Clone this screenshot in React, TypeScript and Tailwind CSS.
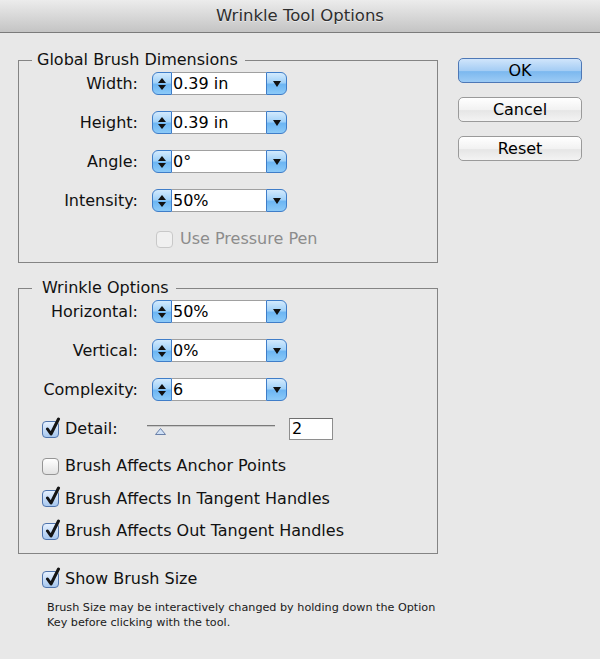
import React from 'react';
import clsx from 'clsx';

// Aqua blue used by spinner / dropdown buttons and the default button
const aqua =
  'bg-[linear-gradient(#d3eafd,#a2d2f9_45%,#6db6f3_55%,#8ccaf8)] border-[#3f7dc8]';

function SpinField({ value }: { value: string }) {
  return (
    <div className="flex h-[23px] w-[135px]">
      <div
        className={clsx(
          'flex w-[20px] flex-col items-center justify-center gap-[2px] rounded-l-[6px] border',
          aqua
        )}
      >
        <svg width="8" height="5" viewBox="0 0 8 5">
          <path d="M4 0L8 5H0z" fill="#111" />
        </svg>
        <svg width="8" height="5" viewBox="0 0 8 5">
          <path d="M0 0h8L4 5z" fill="#111" />
        </svg>
      </div>
      <div className="flex-1 border-y border-[#a0a0a0] bg-white pl-[1px] text-[16px] leading-[21px] text-black">
        {value}
      </div>
      <div
        className={clsx(
          'flex w-[21px] items-center justify-center rounded-r-[6px] border',
          aqua
        )}
      >
        <svg width="8" height="6" viewBox="0 0 8 6">
          <path d="M0 0h8L4 6z" fill="#111" />
        </svg>
      </div>
    </div>
  );
}

function Check({ checked, disabled }: { checked?: boolean; disabled?: boolean }) {
  return (
    <span
      className={clsx(
        'relative inline-block h-[17px] w-[17px] shrink-0 rounded-[4px] border',
        checked
          ? 'border-[#4f74ad] bg-[linear-gradient(#e6f1ff,#a7c7ee)]'
          : disabled
            ? 'border-[#c8c8c8] bg-[#f0f0f0]'
            : 'border-[#959595] bg-[linear-gradient(#ffffff,#e2e2e2)]'
      )}
    >
      {checked && (
        <svg
          className="absolute left-[1px] top-[-5px]"
          width="17"
          height="20"
          viewBox="0 0 17 20"
        >
          <path
            d="M3.5 12 L7 17 L14.5 2"
            fill="none"
            stroke="#141414"
            strokeWidth="3"
            strokeLinecap="round"
            strokeLinejoin="round"
          />
        </svg>
      )}
    </span>
  );
}

function FieldRow({ label, value }: { label: string; value: string }) {
  return (
    <div className="flex h-[23px] items-center">
      <div className="w-[119px] text-right text-[16px] leading-[20px]">{label}</div>
      <div className="ml-[14px]">
        <SpinField value={value} />
      </div>
    </div>
  );
}

function CheckRow({ label, checked }: { label: string; checked?: boolean }) {
  return (
    <div className="flex h-[20px] items-center gap-[6px] pl-[23px] text-[16px]">
      <Check checked={checked} />
      <span>{label}</span>
    </div>
  );
}

function Button({ label, primary }: { label: string; primary?: boolean }) {
  return (
    <button
      className={clsx(
        'h-[25px] w-[124px] rounded-[5px] border text-[16px] leading-none text-black',
        primary
          ? 'border-[#4e78b6] bg-[linear-gradient(#d0e5fb,#a5cdf4_50%,#7cb8ef_55%,#9ccbf5)]'
          : 'border-[#9a9a9a] bg-[linear-gradient(#ffffff,#f2f2f2_50%,#e6e6e6_55%,#f3f3f3)]'
      )}
    >
      {label}
    </button>
  );
}

export default function App() {
  return (
    <div className="h-[659px] w-[600px] overflow-hidden bg-[#e8e8e8] font-['DejaVu_Sans',sans-serif] text-[#111]">
      <div className="h-[33px] border-b border-[#7b7b7b] bg-[linear-gradient(#ececec,#c4c4c4)] text-center text-[16.5px] leading-[32px] text-[#2e2e2e] [text-shadow:0_1px_0_rgba(255,255,255,0.5)]">
        Wrinkle Tool Options
      </div>

      <div className="flex items-start gap-[20px] pl-[18px] pt-[17px]">
        <div className="w-[420px]">
          <fieldset className="border border-[#848484] pb-[13px]">
            <legend className="ml-[13px] pl-[5px] pr-[7px] text-[16px] leading-[20px]">
              Global Brush Dimensions
            </legend>
            <div className="mt-[2px] flex flex-col gap-[16px]">
              <FieldRow label="Width:" value="0.39 in" />
              <FieldRow label="Height:" value="0.39 in" />
              <FieldRow label="Angle:" value="0°" />
              <FieldRow label="Intensity:" value="50%" />
            </div>
            <div className="mt-[17px] flex h-[20px] items-center gap-[7px] pl-[137px] text-[16px] text-[#8c8c8c]">
              <Check disabled />
              <span>Use Pressure Pen</span>
            </div>
          </fieldset>

          <fieldset className="mt-[15px] border border-[#848484] pb-[12px]">
            <legend className="ml-[13px] pl-[10px] pr-[7px] text-[16px] leading-[20px]">
              Wrinkle Options
            </legend>
            <div className="mt-[2px] flex flex-col gap-[16px]">
              <FieldRow label="Horizontal:" value="50%" />
              <FieldRow label="Vertical:" value="0%" />
              <FieldRow label="Complexity:" value="6" />
            </div>

            <div className="mt-[17px] flex h-[22px] items-center pl-[23px]">
              <div className="flex w-[105px] items-center gap-[6px] text-[16px]">
                <Check checked />
                <span>Detail:</span>
              </div>
              <div className="relative h-[22px] w-[128px]">
                <div className="absolute left-0 right-0 top-[7px] h-[2px] border-b border-[#c9c9c9] bg-[#7a7a7a]" />
                <svg
                  className="absolute left-[8px] top-[10px]"
                  width="11"
                  height="7"
                  viewBox="0 0 11 7"
                >
                  <path d="M5.5 0.5L10.5 6.5H0.5z" fill="#cfe0f5" stroke="#6a80a8" />
                </svg>
              </div>
              <div className="ml-[14px] h-[22px] w-[44px] border border-[#8e8e8e] border-t-[#6f6f6f] bg-white pl-[2px] text-[16px] leading-[20px] text-black">
                2
              </div>
            </div>

            <div className="mt-[16px] flex flex-col gap-[12.5px]">
              <CheckRow label="Brush Affects Anchor Points" />
              <CheckRow label="Brush Affects In Tangent Handles" checked />
              <CheckRow label="Brush Affects Out Tangent Handles" checked />
            </div>
          </fieldset>

          <div className="mt-[15px] flex h-[20px] items-center gap-[6px] pl-[24px] text-[16px]">
            <Check checked />
            <span>Show Brush Size</span>
          </div>
          <p className="mt-[11px] pl-[29px] text-[11.2px] leading-[15px] text-[#1a1a1a]">
            Brush Size may be interactively changed by holding down the Option
            <br />
            Key before clicking with the tool.
          </p>
        </div>

        <div className="flex w-[124px] flex-col gap-[14px] pt-[8px]">
          <Button label="OK" primary />
          <Button label="Cancel" />
          <Button label="Reset" />
        </div>
      </div>
    </div>
  );
}
